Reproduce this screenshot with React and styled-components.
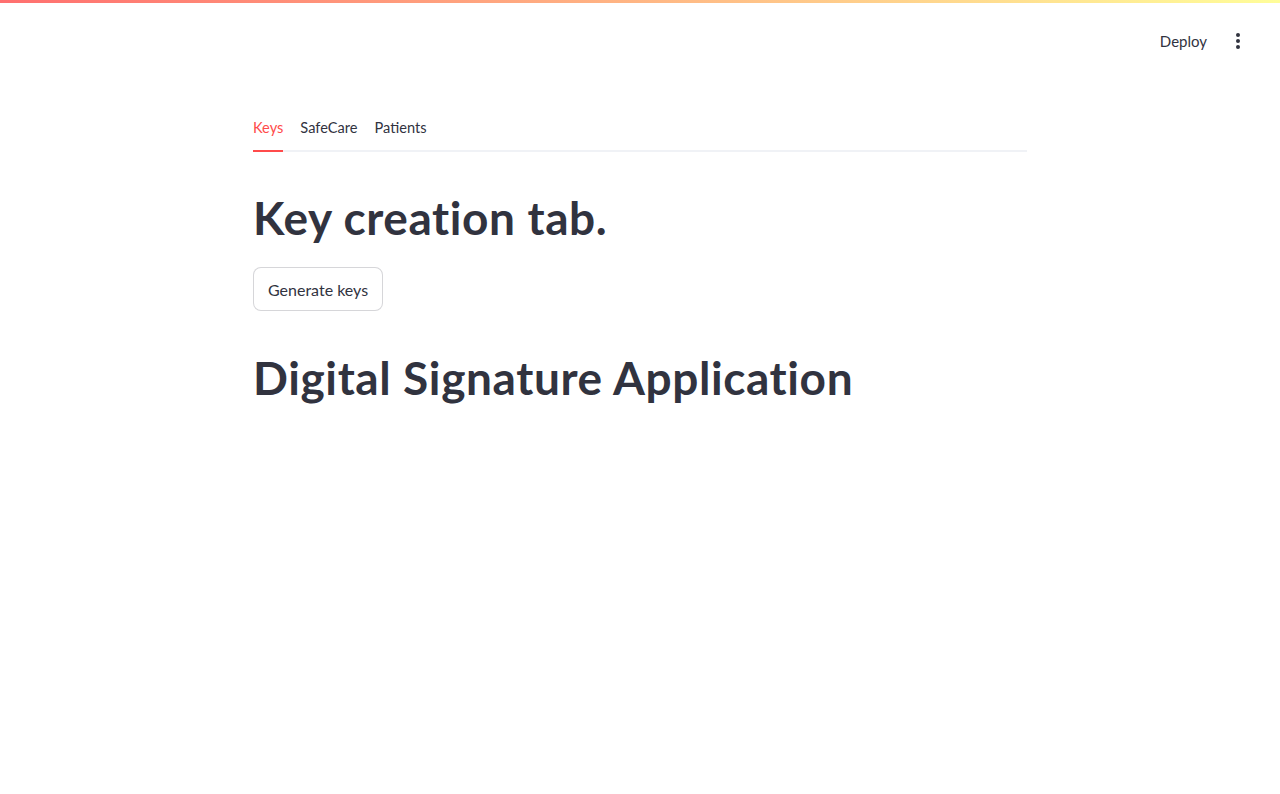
import { useState } from "react";
import styled, { createGlobalStyle } from "styled-components";

const GlobalStyle = createGlobalStyle`
  html, body {
    margin: 0;
    padding: 0;
    background: #ffffff;
  }
  body {
    font-family: "Lato", "Noto Sans", sans-serif;
    color: #31333f;
  }
`;

const tabs = ["Keys", "SafeCare", "Patients"];

const App = () => {
  const [active, setActive] = useState(0);

  return (
    <Page>
      <GlobalStyle />
      <Decoration />
      <Header>
        <DeployButton>Deploy</DeployButton>
        <MenuButton aria-label="Main menu">
          <svg width="4" height="16" viewBox="0 0 4 16" fill="#31333f">
            <circle cx="2" cy="2" r="2" />
            <circle cx="2" cy="8" r="2" />
            <circle cx="2" cy="14" r="2" />
          </svg>
        </MenuButton>
      </Header>

      <Main>
        <TabList>
          {tabs.map((t, i) => (
            <Tab key={t} $active={i === active} onClick={() => setActive(i)}>
              {t}
            </Tab>
          ))}
        </TabList>

        <Panel>
          <Title>Key creation tab.</Title>
          <Button>Generate keys</Button>
        </Panel>

        <Title>Digital Signature Application</Title>
      </Main>
    </Page>
  );
};

const Page = styled.div`
  min-height: 794px;
  position: relative;
`;

const Decoration = styled.div`
  height: 3px;
  background: linear-gradient(90deg, rgb(255, 75, 75), rgb(255, 253, 128));
  opacity: 0.8;
`;

const Header = styled.header`
  height: 76px;
  display: flex;
  align-items: center;
  justify-content: flex-end;
  padding-right: 29px;
  gap: 10px;
`;

const DeployButton = styled.button`
  border: none;
  background: transparent;
  font-family: inherit;
  font-size: 15px;
  color: #31333f;
  padding: 6px 8px;
  cursor: pointer;
`;

const MenuButton = styled.button`
  border: none;
  background: transparent;
  width: 26px;
  height: 26px;
  display: flex;
  align-items: center;
  justify-content: center;
  cursor: pointer;
`;

const Main = styled.main`
  width: 774px;
  margin: 0 auto;
  padding-top: 27px;
`;

const TabList = styled.div`
  display: flex;
  gap: 17px;
  border-bottom: 2px solid #f0f2f6;
`;

const Tab = styled.button`
  position: relative;
  border: none;
  background: transparent;
  padding: 13px 0 14px;
  font-family: inherit;
  font-size: 14.6px;
  color: ${(p) => (p.$active ? "#ff4b4b" : "#31333f")};
  cursor: pointer;

  &::after {
    content: "";
    position: absolute;
    left: 0;
    right: 0;
    bottom: -2px;
    height: 2px;
    background: ${(p) => (p.$active ? "#ff4b4b" : "transparent")};
  }
`;

const Panel = styled.section`
  padding-top: 22px;
`;

const Title = styled.h1`
  margin: 0;
  padding: 16px 0;
  font-size: 46px;
  font-weight: 700;
  letter-spacing: 0.6px;
  line-height: 1.2;
  color: #31333f;
`;

const Button = styled.button`
  height: 44px;
  margin: 6px 0 23px;
  padding: 0 14px;
  border: 1px solid rgba(49, 51, 63, 0.2);
  border-radius: 8px;
  background: #ffffff;
  font-family: inherit;
  font-size: 16px;
  color: #31333f;
  cursor: pointer;
`;

export default App;
